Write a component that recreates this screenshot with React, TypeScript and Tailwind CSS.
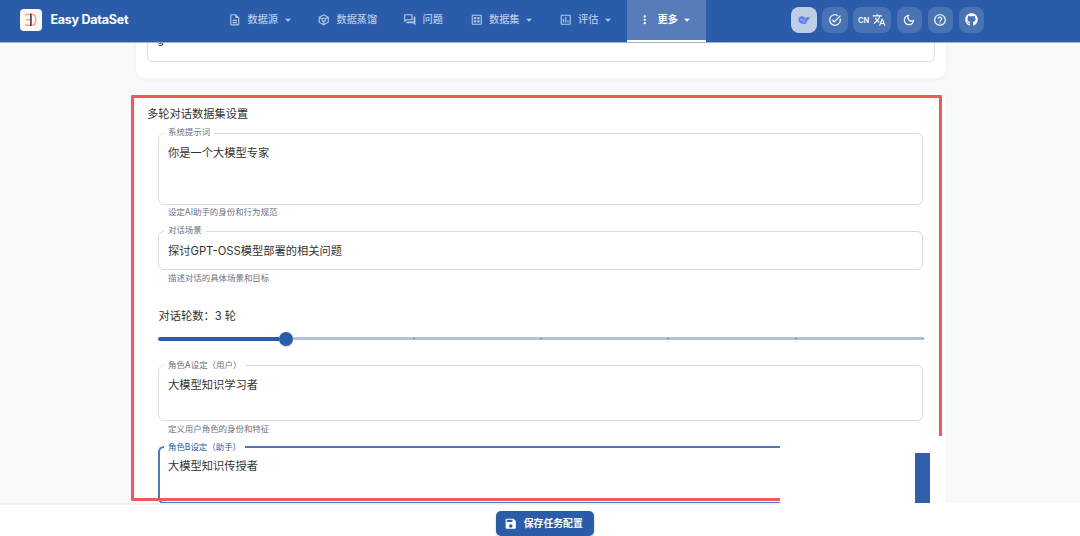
import React from 'react';
import type { ReactNode } from 'react';
import {
  MdOutlineDescription,
  MdOutlineToken,
  MdOutlineQuestionAnswer,
  MdOutlineDataset,
  MdOutlineAssessment,
  MdMoreVert,
  MdArrowDropDown,
  MdTaskAlt,
  MdTranslate,
  MdOutlineDarkMode,
  MdHelpOutline,
  MdSave,
} from 'react-icons/md';
import { FaGithub } from 'react-icons/fa';

function Logo() {
  return (
    <svg className="h-[22px] w-[22px]" viewBox="0 0 22 22" fill="none">
      <rect width="22" height="22" rx="4" fill="#fdf8f5" />
      <path d="M5 5.500h5.500M6 10.800h4.500M5 16.200h5.500" stroke="#eba688" strokeWidth="1.500" />
      <path d="M12 5.400c2.600 0 3.800 2.100 3.800 5.400s-1.200 5.400-3.800 5.400" stroke="#f2ab82" strokeWidth="1.600" />
      <path d="M10.900 4.600v12.400" stroke="#4b3f58" strokeWidth="1.700" />
    </svg>
  );
}

function Whale() {
  return (
    <svg className="h-3 w-3" viewBox="0 0 12 12">
      <path
        d="M.5 5.200C.8 3 3 1.900 5 2.500 6.300 2.900 7 4 8 4.500 8.200 3.500 8.500 3 9 2.400c.2.800.6 1.100 1.200 1 .5-.1.900-.5 1.400-.9.200 1.800-.5 3-1.900 3.300-.3 1.500-1 2.500-2 3.200l.8.900c-1 .3-1.800.1-2.500-.2C3 10.300.2 8.300.5 5.200Z"
        fill="#6379ee"
      />
      <path d="M2.200 5.600c1.800-.4 2.800 1.600 4.200 2.400M6 5.500l1.200.9" stroke="#c3d0ee" strokeWidth="1" fill="none" />
    </svg>
  );
}

function NavItem({ icon, label, caret, width, active }: { icon: ReactNode; label: string; caret?: boolean; width: string; active?: boolean }) {
  return (
    <div
      className={`flex h-[42px] shrink-0 items-center ${width} ${
        active ? 'border-b-2 border-white bg-[#567dba] pt-0.5 pl-3 font-bold text-white' : 'font-medium text-[#b5c8e6]'
      }`}
    >
      <span className="mr-[6px] -ml-[0.500px] flex w-[13.500px] justify-center text-[13.500px]">{icon}</span>
      <span className="text-[10.200px] whitespace-nowrap">{label}</span>
      {caret && <MdArrowDropDown className="ml-[2.500px] text-[14px]" />}
    </div>
  );
}

function Tool({ children, wide, lit }: { children: ReactNode; wide?: boolean; lit?: boolean }) {
  return (
    <div
      className={`flex h-[26px] items-center justify-center gap-[3px] rounded-[8px] text-white ${wide ? 'w-[38px]' : 'w-[25.500px]'} ${
        lit ? 'bg-[#bfcde6]' : 'bg-[#4a73b6]'
      }`}
    >
      {children}
    </div>
  );
}

function Field({ label, value, height, top, legend, body = 'pt-[7px]' }: { label: string; value: string; height: string; top: string; legend: string; body?: string }) {
  return (
    <fieldset className={`ml-[22px] w-[765px] rounded-[6px] border border-[#d9dbdf] ${height} ${top}`}>
      <legend className={`ml-[5px] h-[10px] px-[4px] text-[8.450px] whitespace-nowrap text-[#6b7280] ${legend}`}>{label}</legend>
      <div className={`${body} pl-[9px] text-[11.250px] leading-4 text-[#333]`}>{value}</div>
    </fieldset>
  );
}

function Hint({ children }: { children: ReactNode }) {
  return <div className="ml-8 h-[10px] text-[8.450px] leading-[10px] text-[#6b7280]">{children}</div>;
}

export default function App() {
  return (
    <div className="flex h-[536px] w-[1080px] flex-col overflow-hidden bg-[#f8f9fb] font-['Inter','Noto_Sans_CJK_SC',sans-serif]">
      <header className="z-10 flex h-[42px] shrink-0 items-center bg-[#2a5caa] shadow-[0_1px_0_#9fb3d4]">
        <div className="flex w-[228.500px] items-center pb-[2px] pl-5">
          <Logo />
          <span className="ml-[8.500px] text-[12.500px] font-bold tracking-[-0.25px] text-white">Easy DataSet</span>
        </div>
        <nav className="flex w-[562px]">
          <NavItem icon={<MdOutlineDescription />} label="数据源" caret width="w-[89px] pb-[2px]" />
          <NavItem icon={<MdOutlineToken />} label="数据蒸馏" width="w-[86px] pb-[2px]" />
          <NavItem icon={<MdOutlineQuestionAnswer />} label="问题" width="w-[66.500px] pb-[2px]" />
          <NavItem icon={<MdOutlineDataset />} label="数据集" caret width="w-[89px] pb-[2px]" />
          <NavItem icon={<MdOutlineAssessment />} label="评估" caret width="w-[67.500px] pb-[2px]" />
          <NavItem icon={<MdMoreVert />} label="更多" caret width="w-[79px] pb-[2px]" active />
        </nav>
        <div className="ml-[0.500px] flex gap-[5.500px] pb-[3px]">
          <Tool lit><Whale /></Tool>
          <Tool><MdTaskAlt className="text-[14px]" /></Tool>
          <Tool wide><span className="pt-[2px] text-[7.500px] leading-3 font-semibold">CN</span><MdTranslate className="text-[14px]" /></Tool>
          <Tool><MdOutlineDarkMode className="text-[14px]" /></Tool>
          <Tool><MdHelpOutline className="text-[14px]" /></Tool>
          <Tool><FaGithub className="text-[13px]" /></Tool>
        </div>
      </header>
      <main className="flex h-[461px] shrink-0 flex-col overflow-hidden">
        <section className="ml-[136px] h-9 w-[809.500px] shrink-0 rounded-b-[9px] bg-white px-[11px] shadow-[0_1px_5px_#0000000d]">
          <div className="h-[20px] w-[788px] overflow-hidden rounded-b-[6px] border-x border-b border-[#dddfe3] pl-[9px] text-[11.250px] text-[#333]">
            <div className="-mt-[10px] leading-4">g</div>
          </div>
        </section>
        <section className="mt-[17px] flex h-[408px] w-[945px] shrink-0 pl-[131px]">
          <div className="relative w-[814px]">
            <div className="ml-[5px] h-full bg-white pt-[11px]">
              <h2 className="ml-[11px] h-4 text-[11.250px] leading-4 text-[#333]">多轮对话数据集设置</h2>
              <Field label="系统提示词" value="你是一个大模型专家" height="h-[77px]" top="mt-[6px]" legend="w-[50px] leading-[9px]" />
              <div className="mt-[2px]"><Hint>设定AI助手的身份和行为规范</Hint></div>
              <Field label="对话场景" value="探讨GPT-OSS模型部署的相关问题" height="h-[44px]" top="mt-[9px]" legend="w-[42px] leading-[9px]" />
              <div className="mt-[3px]"><Hint>描述对话的具体场景和目标</Hint></div>
              <div className="mt-[25px] ml-[22.500px] h-4 text-[11.250px] leading-4 text-[#333]">对话轮数：3 轮</div>
              <div className="mt-[7.500px] ml-[22px] flex h-[14px] w-[765.500px] items-center">
                <div className="h-[4px] w-[121px] rounded-l-full bg-[#2a5caa]" />
                <div className="h-[14px] w-[14px] rounded-full bg-[#2a5caa] shadow-[0_1px_2px_#0003]" />
                <div className="flex h-[2.500px] flex-1 items-center rounded-r-full bg-[#b1c2dd]">
                  <i className="ml-[119.500px] h-[1.500px] w-[2px] bg-[#6485b8]" />
                  <i className="ml-[125.500px] h-[1.500px] w-[2px] bg-[#6485b8]" />
                  <i className="ml-[125px] h-[1.500px] w-[2px] bg-[#6485b8]" />
                  <i className="ml-[125.500px] h-[1.500px] w-[2px] bg-[#6485b8]" />
                  <i className="ml-[125px] h-[1.500px] w-[2px] bg-[#6485b8]" />
                </div>
              </div>
              <Field label="角色A设定（用户）" value="大模型知识学习者" height="h-[61px]" top="mt-[14.500px]" legend="w-[81px] leading-[10px]" body="pt-[6.500px]" />
              <div className="mt-[3px]"><Hint>定义用户角色的身份和特征</Hint></div>
              <fieldset className="mt-[8px] ml-[22px] h-[62px] w-[622px] rounded-l-[6px] border-y-2 border-l-2 border-[#5377b7]">
                <legend className="ml-[4px] h-[10px] w-[81px] px-[4px] text-[8.450px] leading-[10px] whitespace-nowrap text-[#2a5caa]">角色B设定（助手）</legend>
                <div className="pt-[6px] pl-[8px] text-[11.250px] leading-4 text-[#333]">大模型知识传授者</div>
              </fieldset>
            </div>
            <div className="absolute top-0 left-0 h-[406px] w-[649px] rounded-l-[2px] border-y-[3px] border-l-[3px] border-[#f0585a]" />
            <div className="absolute top-0 right-[3px] h-[341px] w-[163px] rounded-tr-[2px] border-t-[3px] border-r-[3px] border-[#f0585a]" />
            <div className="absolute top-[358px] right-[15px] h-[50px] w-[15px] bg-[#3060ab]" />
          </div>
        </section>
      </main>
      <footer className="flex h-[33px] shrink-0 bg-white">
        <div className="flex h-full w-[780px] justify-end border-t-2 border-[#f1f2f4] pt-1.5 pr-[186.500px]">
          <button className="flex h-[25px] w-[98px] items-center justify-center gap-[6px] rounded-[5px] bg-[#2a5caa] pr-[2px] text-[9.850px] font-bold whitespace-nowrap text-white shadow-[0_1px_3px_#2a5caa44]">
            <MdSave className="text-[13.500px]" />
            保存任务配置
          </button>
        </div>
      </footer>
    </div>
  );
}
